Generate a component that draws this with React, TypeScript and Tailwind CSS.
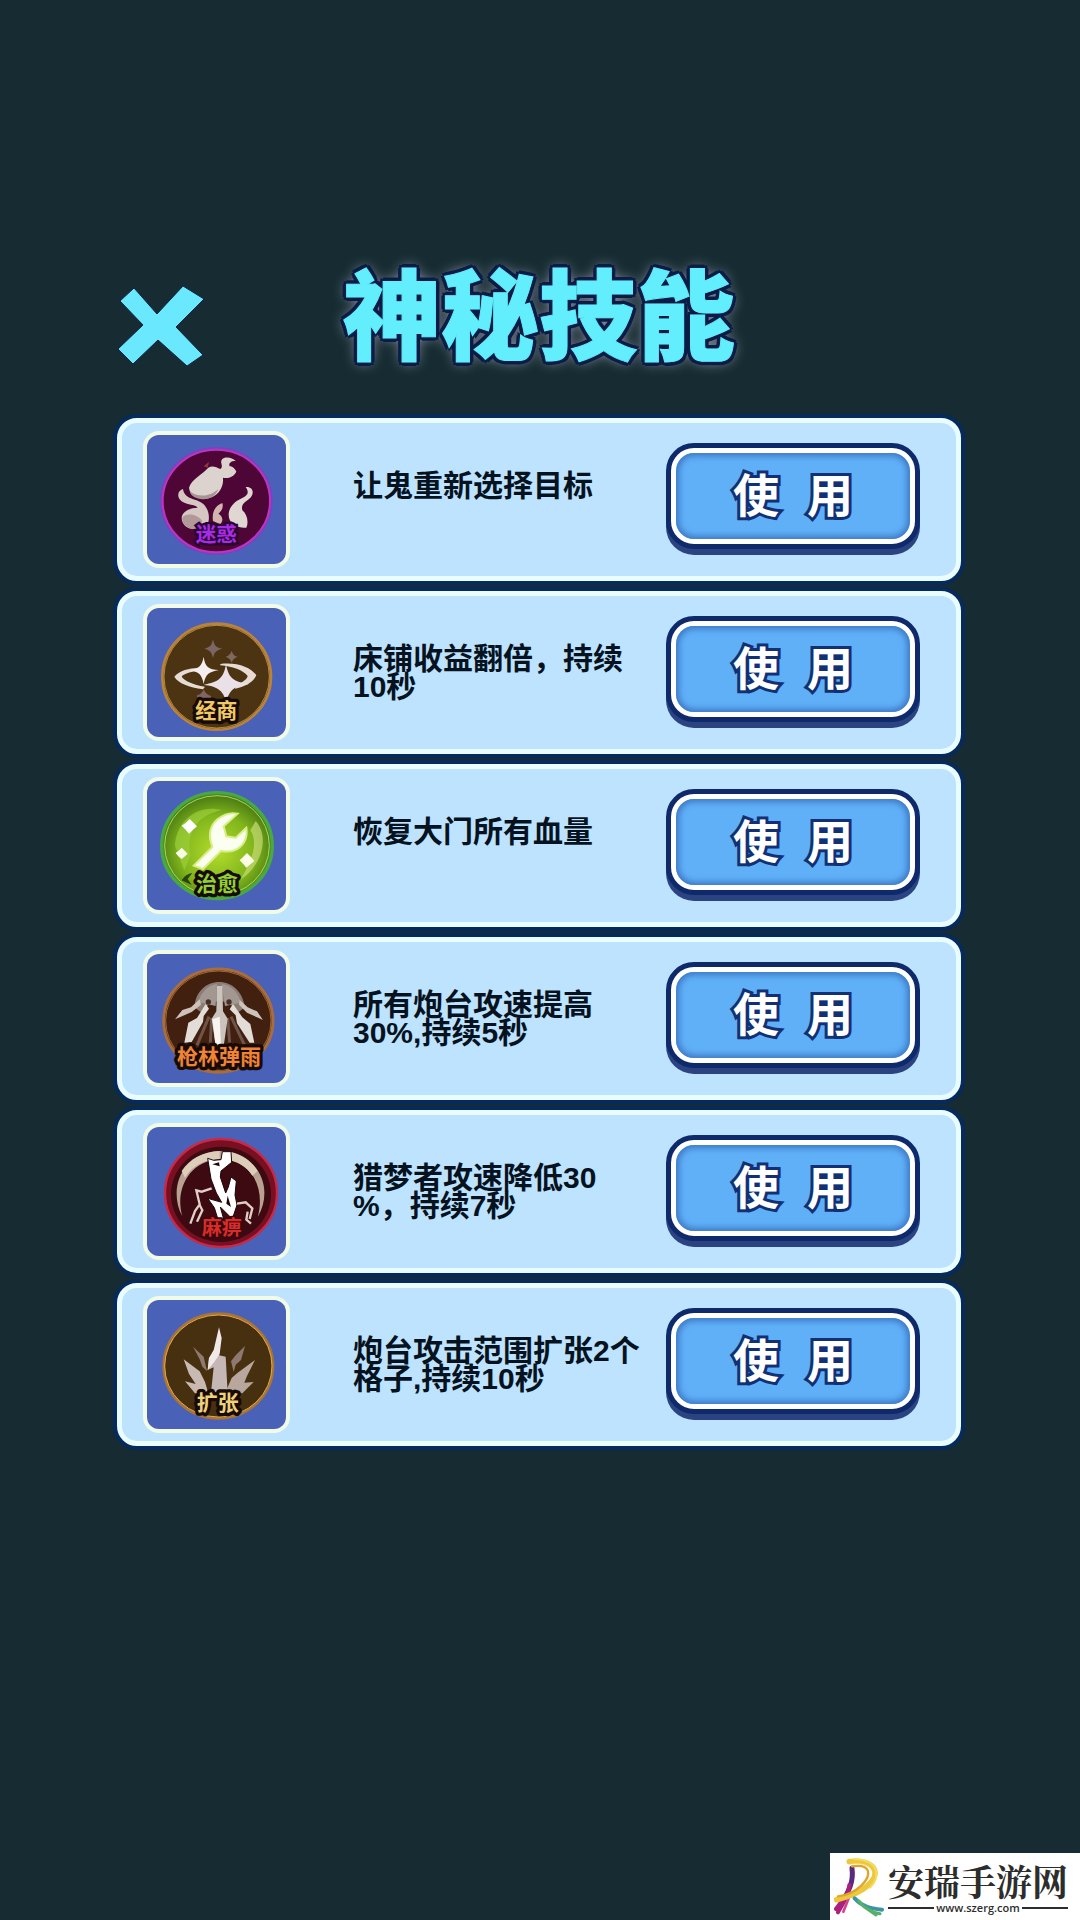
import type { ReactNode } from 'react'

type Skill = {
  id: string
  label: string
  lines: string[]
  art: ReactNode
}

const FONT = "font-['Liberation_Sans','Noto_Sans_CJK_SC',sans-serif]"

function IconLabel({ x, fill, children }: { x: number; fill: string; children: string }) {
  return (
    <text
      x={x}
      y={359}
      textAnchor="middle"
      fontSize={63}
      fontWeight={700}
      fill={fill}
      stroke="#170b08"
      strokeWidth={20}
      strokeLinejoin="round"
      paintOrder="stroke"
    >
      {children}
    </text>
  )
}

const skills: Skill[] = [
  {
    id: 'confuse',
    label: '迷惑',
    lines: ['让鬼重新选择目标'],
    art: (
      <>
        <ellipse cx="228" cy="226" rx="169" ry="162" fill="#a428c4" opacity="0.5" />
        <ellipse cx="228" cy="226" rx="161" ry="154" fill="#4d0635" stroke="#c032c4" strokeWidth="6" />
        <path d="M190 122 L206 108 L202 126Z" fill="#8a3a3c" />
        <path
          d="M146 186 C154 160 182 150 204 126 C216 118 228 124 240 130 C252 122 236 110 246 100 C258 92 276 96 286 106 C272 106 264 112 268 122 C278 122 284 130 288 138 C280 154 262 160 248 156 C250 180 240 200 220 212 C196 226 148 216 146 186Z"
          fill="#ddd3ce"
        />
        <path d="M148 196 C170 216 210 214 234 190 C226 214 202 224 180 220 C160 216 150 208 148 196Z" fill="#a79592" />
        <path
          d="M128 190 C108 196 108 222 134 232 C150 238 166 238 172 246 C152 246 126 256 124 276 C124 296 140 310 162 310 L198 304 C212 280 206 250 188 234 C168 218 132 222 128 190Z"
          fill="#d6c7c3"
        />
        <path d="M126 276 C134 262 168 262 184 284 C188 296 176 308 162 310 C140 310 124 294 126 276Z" fill="#b09998" />
        <path d="M246 232 C224 240 214 260 218 286 L240 296 C252 282 244 268 234 264 C244 256 250 246 246 232Z" fill="#d3b5af" />
        <path
          d="M316 184 C340 182 344 206 326 220 C310 232 302 238 306 254 C320 266 326 288 318 306 C300 306 276 302 268 282 C258 258 274 232 300 220 C318 212 330 204 316 184Z"
          fill="#e0d6d2"
        />
        <text x={228} y={350} textAnchor="middle" fontSize={62} fontWeight={700} fill="#a82be6" stroke="#2b0630" strokeWidth={14} paintOrder="stroke">
          迷惑
        </text>
      </>
    ),
  },
  {
    id: 'business',
    label: '经商',
    lines: ['床铺收益翻倍，持续', '10秒'],
    art: (
      <>
        <ellipse cx="229" cy="234" rx="163" ry="159" fill="#4c3413" stroke="#bb8239" strokeWidth="8" />
        <ellipse cx="229" cy="234" rx="158" ry="154" fill="none" stroke="#e5b45c" strokeWidth="2" />
        <path d="M218 122 C222 142 228 148 246 150 C228 154 222 160 218 178 C214 160 208 154 192 150 C208 146 214 142 218 122Z" fill="#7b6664" />
        <path d="M274 156 Q278 172 292 174 Q278 178 274 192 Q270 178 256 174 Q270 170 274 156Z" fill="#806860" />
        <path d="M190 272 Q196 288 212 292 L210 306 H172 L170 290 Q186 286 190 272Z" fill="#806560" />
        <path d="M102 234 C118 216 146 208 174 208 L168 218 C148 220 130 226 124 234 C132 246 158 258 194 264 L188 272 C146 266 114 254 102 234Z" fill="#e6dcd3" />
        <path d="M240 196 C290 190 332 206 348 230 C336 254 312 264 284 270 L288 258 C306 252 320 242 322 232 C310 216 280 204 240 200Z" fill="#e6dcd3" />
        <path d="M190 174 C194 204 204 212 236 214 C204 220 196 226 190 256 C184 226 176 220 148 214 C178 208 184 202 190 174Z" fill="#f5eef0" />
        <path d="M257 196 C264 238 280 250 326 256 C280 264 268 272 258 310 C248 274 232 264 190 258 C236 250 250 238 257 196Z" fill="#e9e0e8" />
        <IconLabel x={228} fill="#f0c965">经商</IconLabel>
      </>
    ),
  },
  {
    id: 'heal',
    label: '治愈',
    lines: ['恢复大门所有血量'],
    art: (
      <>
        <defs>
          <radialGradient id="healGlow" cx="50%" cy="55%" r="52%">
            <stop offset="0" stopColor="#b4dc2c" />
            <stop offset="0.65" stopColor="#80b51c" />
            <stop offset="1" stopColor="#4c7c14" />
          </radialGradient>
        </defs>
        <ellipse cx="230" cy="222" rx="166" ry="159" fill="url(#healGlow)" stroke="#48a844" strokeWidth="10" />
        <ellipse cx="230" cy="222" rx="157" ry="150" fill="none" stroke="#a5d95a" strokeWidth="3" />
        <path d="M104 222 C108 142 180 96 244 116 C184 128 136 168 150 252 L132 296Z" fill="#9bcf39" opacity="0.7" />
        <path d="M346 148 C388 194 366 282 300 324 C332 272 356 216 330 176Z" fill="#c8dc74" opacity="0.7" />
        <path
          d="M160 282 L216 226 C204 194 206 164 232 142 C250 128 274 122 292 126 L250 164 L258 194 L286 198 L318 168 C324 200 308 226 282 236 C268 242 254 240 242 238 L188 292Z"
          fill="#fbfff1"
          stroke="#d7ef83"
          strokeWidth="6"
        />
        <path d="M148 142 L160 154 L170 164 L158 174 L146 186 L136 174 L124 162 L136 154Z" fill="#fff" />
        <path d="M124 228 L134 238 L142 246 L134 254 L124 262 L114 254 L106 244 L114 238Z" fill="#f9ffe8" />
        <path d="M320 244 L332 256 L342 268 L330 278 L318 288 L308 276 L298 266 L308 256Z" fill="#fbffe6" />
        <path d="M124 326 Q136 306 156 304 L142 322 L154 340Z" fill="#2a450b" />
        <IconLabel x={230} fill="#93cf35">治愈</IconLabel>
      </>
    ),
  },
  {
    id: 'barrage',
    label: '枪林弹雨',
    lines: ['所有炮台攻速提高', '30%,持续5秒'],
    art: (
      <>
        <ellipse cx="234" cy="228" rx="164" ry="155" fill="#41200f" stroke="#a86c3d" strokeWidth="9" />
        <ellipse cx="234" cy="228" rx="158" ry="149" fill="none" stroke="#cf8b4e" strokeWidth="2" />
        <path d="M162 188 C166 140 198 112 236 112 C276 112 306 140 314 188 L290 206 L272 180 L238 166 L204 180 L184 204Z" fill="#8b7d75" />
        <path d="M174 172 C184 138 208 120 230 118 L226 184Z M244 118 C274 122 294 144 302 174 L254 184Z" fill="#a29891" />
        <path d="M206 216 L170 302 M272 216 L312 300 M214 220 L210 294 M262 220 L268 294" stroke="#705449" strokeWidth="9" />
        <path d="M230 124 H246 L248 200 L262 222 L250 304 H226 L214 222 L228 200Z" fill="#cac3be" />
        <path d="M216 224 L226 304 H242 L238 216Z" fill="#f8f4ef" />
        <path d="M196 178 L206 192 L190 214 L188 232 L154 292 L132 294 L144 234 L170 220Z" fill="#e3ddd7" />
        <path d="M278 178 L268 194 L286 212 L290 236 L328 294 L342 294 L330 238 L306 218Z" fill="#e3ddd7" />
        <path d="M178 164 L182 180 L154 202 L104 224 L126 196 L152 188Z M298 166 L296 180 L320 204 L368 226 L350 200 L322 188Z" fill="#cec3bb" />
        <circle cx="204" cy="172" r="8" fill="#453028" />
        <circle cx="266" cy="172" r="8" fill="#453028" />
        <IconLabel x={236} fill="#ef8434">枪林弹雨</IconLabel>
      </>
    ),
  },
  {
    id: 'numb',
    label: '麻痹',
    lines: ['猎梦者攻速降低30', '%，持续7秒'],
    art: (
      <>
        <ellipse cx="242" cy="226" rx="168" ry="162" fill="#781022" stroke="#c72a49" strokeWidth="7" />
        <ellipse cx="242" cy="230" rx="150" ry="143" fill="#3c0a10" />
        <path d="M126 296 C82 214 124 106 238 100 C352 104 404 210 352 298 C374 222 344 128 240 124 C140 130 104 222 126 296Z" fill="#b8a191" />
        <path d="M124 160 C148 124 186 102 238 100 V124 C190 126 154 146 134 180Z M270 102 C310 112 336 132 352 160 L336 174 C320 150 298 134 268 128Z" fill="#ddceba" />
        <path
          d="M202 122 L220 128 L242 126 L246 102 H272 L274 134 L242 160 L240 178 L256 226 L264 208 L272 178 L288 190 L284 232 L290 262 L276 304 L240 268 L250 304 L232 302 L222 270 L202 242 L244 254 L228 226 L212 184Z"
          fill="#fff"
          stroke="#1c0709"
          strokeWidth="3"
        />
        <path d="M216 140 L236 134 L238 146Z M262 234 L258 258 L272 268Z" fill="#1c0709" />
        <path
          d="M214 212 L184 222 L168 218 L178 260 L164 280 L150 318 M178 262 L186 278 L170 312 M290 258 L316 254 L336 272 L328 304 M322 282 L318 306 L332 318"
          fill="none"
          stroke="#e0cfc8"
          strokeWidth="7"
        />
        <text x={244} y={352} textAnchor="middle" fontSize={60} fontWeight={700} fill="#d82c2b" stroke="#3b090c" strokeWidth={10} paintOrder="stroke">
          麻痹
        </text>
      </>
    ),
  },
  {
    id: 'expand',
    label: '扩张',
    lines: ['炮台攻击范围扩张2个', '格子,持续10秒'],
    art: (
      <>
        <ellipse cx="234" cy="226" rx="164" ry="157" fill="#473010" stroke="#a97434" strokeWidth="8" />
        <ellipse cx="234" cy="226" rx="161" ry="153" fill="none" stroke="#e0a94d" strokeWidth="3" />
        <path d="M158 168 L190 198 L200 242 L186 228 L178 206Z M314 166 L302 208 L286 222 L280 244 L272 212 L286 194Z" fill="#8d7970" />
        <path d="M130 206 L178 242 L194 274 L204 308 H164 L134 272 L166 280 L146 250Z" fill="#c8bab3" />
        <path d="M344 208 L320 256 L312 276 L340 274 L306 308 H254 L274 262 L292 246Z" fill="#b9a69c" />
        <path d="M236 194 L256 198 L262 306 H212 L220 230 L202 238 L206 202 L224 180Z" fill="#c4b7b6" />
        <path d="M236 110 L244 142 L238 190 L222 214 L202 238 L206 202 L220 178Z" fill="#f0e9e7" />
        <IconLabel x={232} fill="#efd17c">扩张</IconLabel>
      </>
    ),
  },
]

function SkillRow({ skill }: { skill: Skill }) {
  return (
    <li className="flex items-center rounded-[20px] border-[5px] border-[#e9fdff] bg-[#bde3ff] py-2 pr-9 pl-[21px] shadow-[0_0_0_4px_#052a5b]">
      <div className="shrink-0 rounded-2xl border-4 border-[#f1fbe6] bg-[#f1fbe6]">
        <svg
          role="img"
          aria-label={skill.label}
          viewBox="20 28 417 387"
          className="block h-[129px] w-[139px] rounded-xl bg-[#4a61b8]"
        >
          {skill.art}
        </svg>
      </div>
      <p className="ml-[63px] min-h-14 flex-1 text-[30px] leading-7 font-bold whitespace-nowrap text-[#06131f]">
        {skill.lines.map((line) => (
          <span key={line} className="block">
            {line}
          </span>
        ))}
      </p>
      <button
        type="button"
        className="mb-2 h-[106px] w-[254px] shrink-0 rounded-[28px] border-[5px] border-[#0e2a6b] bg-white p-[5px] shadow-[0_6px_0_#2b4380]"
      >
        <span className="flex h-full items-center justify-center gap-7 rounded-[18px] bg-[#60b0f8] text-[46px] leading-none font-bold text-white shadow-[inset_0_0_6px_3px_#3d77c4] [-webkit-text-stroke:6px_#123074] [paint-order:stroke_fill]">
          <span>使</span>
          <span>用</span>
        </span>
      </button>
    </li>
  )
}

function SiteMark() {
  return (
    <footer className="mt-auto flex h-[67px] w-[250px] items-center self-end bg-white pr-3 pl-1 text-[#2d2d2d]">
      <svg viewBox="0 0 150 180" className="h-[60px] w-[50px] shrink-0" fill="none" strokeLinecap="round">
        <path d="M54 34 C60 78 40 108 28 130" stroke="#592a7c" strokeWidth="15" />
        <path d="M46 84 C42 118 28 138 12 166 M34 118 L6 156" stroke="#aa207c" strokeWidth="12" />
        <path d="M28 164 L44 124" stroke="#d24492" strokeWidth="8" />
        <path d="M46 14 C130 8 142 52 98 88 C74 110 38 120 8 128" stroke="#eec83c" strokeWidth="17" />
        <path d="M54 28 C112 20 114 54 82 86 C58 108 34 116 12 118" stroke="#e0a42c" strokeWidth="7" />
        <path d="M60 6 C138 8 140 62 108 92" stroke="#f4dc62" strokeWidth="6" />
        <path d="M52 22 C110 14 128 44 96 78" stroke="#fff7cf" strokeWidth="2" />
        <path d="M62 124 C84 148 108 154 144 158" stroke="#3d95a4" strokeWidth="12" />
        <path d="M74 132 C92 154 112 166 138 170 M88 148 L126 174" stroke="#57b06a" strokeWidth="9" />
      </svg>
      <div className="ml-1 flex-1">
        <p className="text-center font-['Noto_Serif_CJK_SC','Noto_Sans_CJK_SC',serif] text-4xl leading-[42px] font-bold whitespace-nowrap">
          安瑞手游网
        </p>
        <div className="flex items-center gap-0.5">
          <span className="h-0.5 flex-1 bg-[#2d2d2d]" />
          <a href="http://www.szerg.com" className="font-['Open_Sans',sans-serif] text-[11px] leading-3 font-semibold">
            www.szerg.com
          </a>
          <span className="h-0.5 flex-1 bg-[#2d2d2d]" />
        </div>
      </div>
    </footer>
  )
}

export default function App() {
  return (
    <div className={`flex min-h-screen flex-col bg-[#162c32] ${FONT}`}>
      <main className="pt-[254px] pr-[119px] pl-[117px]">
        <header className="grid grid-cols-[1fr_auto_1fr] items-center">
          <button type="button" aria-label="关闭" className="mt-4 w-[88px]">
            <svg viewBox="0 0 88 82" className="block w-full">
              <path
                d="M17 3 L40 29 L66 1 L87 14 L59 42 L86 70 L70 81 L41 55 L16 79 L1 64 L26 40 L3 16Z"
                fill="#6ae8fd"
                stroke="#152443"
                strokeWidth="1"
              />
            </svg>
          </button>
          <h1 className="text-[98px] leading-[128px] font-black text-[#62eefc] [-webkit-text-stroke:1px_#62eefc] [text-shadow:4px_0_0_#0b1d47,-4px_0_0_#0b1d47,0_4px_0_#0b1d47,0_-4px_0_#0b1d47,3px_3px_0_#0b1d47,-3px_3px_0_#0b1d47,3px_-3px_0_#0b1d47,-3px_-3px_0_#0b1d47,0_0_14px_#b9b4cc]">
            神秘技能
          </h1>
        </header>
        <ul className="mt-9 flex flex-col gap-2.5">
          {skills.map((skill) => (
            <SkillRow key={skill.id} skill={skill} />
          ))}
        </ul>
      </main>
      <SiteMark />
    </div>
  )
}
